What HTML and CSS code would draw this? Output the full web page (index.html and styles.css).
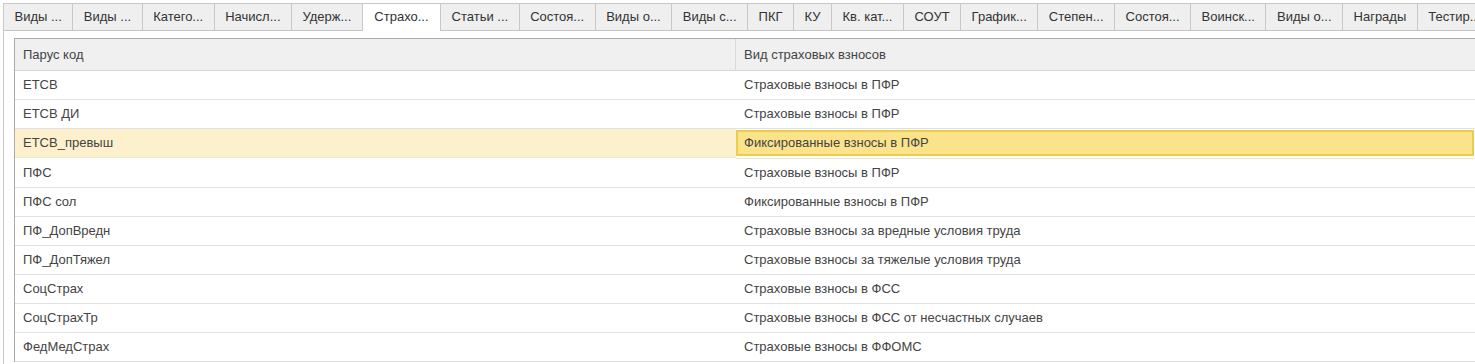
FILE: index.html
```html
<!DOCTYPE html>
<html lang="ru">
<head>
    <meta charset="UTF-8">
    <title>Страховые взносы</title>
    <link rel="stylesheet" href="styles.css">
</head>
<body>
    <div class="tabs">
        <div class="tab">Виды ...</div>
        <div class="tab">Виды ...</div>
        <div class="tab">Катего...</div>
        <div class="tab">Начисл...</div>
        <div class="tab">Удерж...</div>
        <div class="tab active">Страхо...</div>
        <div class="tab">Статьи ...</div>
        <div class="tab">Состоя...</div>
        <div class="tab">Виды о...</div>
        <div class="tab">Виды с...</div>
        <div class="tab">ПКГ</div>
        <div class="tab">КУ</div>
        <div class="tab">Кв. кат...</div>
        <div class="tab">СОУТ</div>
        <div class="tab">График...</div>
        <div class="tab">Степен...</div>
        <div class="tab">Состоя...</div>
        <div class="tab">Воинск...</div>
        <div class="tab">Виды о...</div>
        <div class="tab">Награды</div>
        <div class="tab">Тестир...</div>
    </div>

    <div class="panel">
        <div class="grid">
            <div class="head">Парус код</div>
            <div class="head">Вид страховых взносов</div>

            <div class="cell">ЕТСВ</div>
            <div class="cell">Страховые взносы в ПФР</div>

            <div class="cell">ЕТСВ ДИ</div>
            <div class="cell">Страховые взносы в ПФР</div>

            <div class="cell sel">ЕТСВ_превыш</div>
            <div class="cell sel"><span class="current">Фиксированные взносы в ПФР</span></div>

            <div class="cell">ПФС</div>
            <div class="cell">Страховые взносы в ПФР</div>

            <div class="cell">ПФС сол</div>
            <div class="cell">Фиксированные взносы в ПФР</div>

            <div class="cell">ПФ_ДопВредн</div>
            <div class="cell">Страховые взносы за вредные условия труда</div>

            <div class="cell">ПФ_ДопТяжел</div>
            <div class="cell">Страховые взносы за тяжелые условия труда</div>

            <div class="cell">СоцСтрах</div>
            <div class="cell">Страховые взносы в ФСС</div>

            <div class="cell">СоцСтрахТр</div>
            <div class="cell">Страховые взносы в ФСС от несчастных случаев</div>

            <div class="cell">ФедМедСтрах</div>
            <div class="cell">Страховые взносы в ФФОМС</div>
        </div>
    </div>
</body>
</html>
```

FILE: styles.css
```css
body {
    margin: 0;
    background-color: #fff;
    font-family: "Liberation Sans", Arial, sans-serif;
    font-size: 13px;
    color: #444;
    overflow: hidden;
}
.tabs {
    display: flex;
    margin: 3px 0 0 3px;
    height: 27px;
    border-bottom: 1px solid #c4c4c4;
    white-space: nowrap;
}
.tab {
    flex: none;
    height: 26px;
    line-height: 26px;
    padding: 0 10.5px;
    background-color: #efefef;
    border: 1px solid #c8c8c8;
    border-left: none;
    border-bottom: none;
    color: #333;
}
.tab:first-child {
    border-left: 1px solid #c8c8c8;
}
.tab.active {
    background-color: #fff;
    height: 27px;
    padding: 0 11.5px;
}
.panel {
    margin-left: 3px;
    border-left: 1px solid #c8c8c8;
    padding: 7px 0 0 10px;
    height: 330px;
}
.grid {
    display: grid;
    grid-template-columns: 721px 1fr;
    border-top: 1px solid #aaa;
    border-left: 1px solid #aaa;
}
.head {
    height: 31px;
    line-height: 31px;
    padding-left: 8px;
    background-color: #f0f0f0;
    border-bottom: 1px solid #d6d6d6;
}
.head:first-child {
    border-right: 1px solid #dadada;
}
.cell {
    height: 28px;
    line-height: 28px;
    padding-left: 8px;
    border-bottom: 1px solid #e2e2e2;
    white-space: nowrap;
}
.cell:nth-child(odd) {
    padding-right: 1px;
}
.cell.sel {
    background-color: #fcf1cc;
    border-bottom-color: #e6ebd2;
}
.cell.sel:has(.current) {
    padding: 1px 1px 0 0;
    background-color: #fff;
}
.current {
    display: block;
    height: 22px;
    line-height: 22px;
    padding-left: 6px;
    background-color: #fbe38b;
    border: 2px solid #edcc4a;
}
```
